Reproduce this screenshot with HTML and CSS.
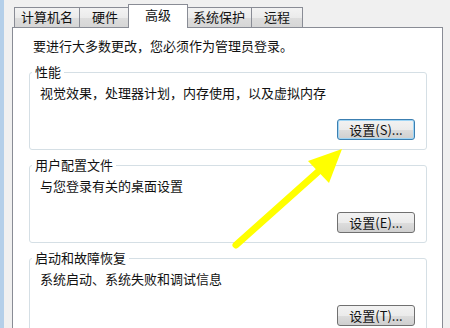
FILE: index.html
```html
<!DOCTYPE html>
<html lang="zh-CN">
<head>
  <meta charset="UTF-8" />
  <title>系统属性 - 高级</title>
  <link rel="stylesheet" href="styles.css">
</head>
<body>
  <div class="window">
    <div class="tabs">
      <div class="tab">计算机名</div>
      <div class="tab">硬件</div>
      <div class="tab active">高级</div>
      <div class="tab">系统保护</div>
      <div class="tab">远程</div>
    </div>

    <div class="panel">
      <p class="note">要进行大多数更改，您必须作为管理员登录。</p>

      <fieldset class="group">
        <legend>性能</legend>
        <p class="desc">视觉效果，处理器计划，内存使用，以及虚拟内存</p>
        <div class="actions"><button class="btn focused">设置(S)...</button></div>
      </fieldset>

      <fieldset class="group">
        <legend>用户配置文件</legend>
        <p class="desc">与您登录有关的桌面设置</p>
        <div class="actions"><button class="btn">设置(E)...</button></div>
      </fieldset>

      <fieldset class="group">
        <legend>启动和故障恢复</legend>
        <p class="desc">系统启动、系统失败和调试信息</p>
        <div class="actions"><button class="btn">设置(T)...</button></div>
      </fieldset>
    </div>
  </div>

  <svg class="arrow" width="450" height="328" viewBox="0 0 450 328">
    <line x1="236" y1="245" x2="320" y2="170" stroke="#ffff00" stroke-width="7" stroke-linecap="round" />
    <polygon points="342,149 308,161 329,183" fill="#ffff00" />
  </svg>
</body>
</html>
```

FILE: styles.css
```css
body {
  margin: 0;
  width: 450px;
  height: 328px;
  overflow: hidden;
  background: #f0f0f0;
  font-family: "Noto Sans CJK SC", "Noto Sans", sans-serif;
  font-size: 13px;
  color: #111;
}

.window {
  display: flex;
  flex-direction: column;
  border-left: 4px solid #b4cfe9;
  padding: 4px 7px 0 8px;
  height: 100%;
  box-sizing: border-box;
}

.tabs {
  display: flex;
  align-items: flex-end;
  margin-left: 2px;
}

.tab {
  box-sizing: border-box;
  min-width: 52px;
  height: 20px;
  line-height: 18px;
  padding: 0 6px;
  text-align: center;
  border: 1px solid #898c95;
  border-bottom: none;
  background: linear-gradient(#f3f3f3, #ebebeb 50%, #dddddd 51%, #d6d6d6);
  margin-left: -1px;
}

.tab:first-child {
  margin-left: 0;
}

.tab.active {
  min-width: 60px;
  height: 24px;
  line-height: 20px;
  margin: 0 -2px -1px -3px;
  background: #fff;
  position: relative;
  z-index: 1;
}

.tab.active + .tab {
  margin-left: 0;
}

.panel {
  flex: 1;
  overflow: hidden;
  background: #fff;
  border: 1px solid #898c95;
  border-bottom: none;
  padding: 10px 15px 0 16px;
}

.note {
  margin: 0 0 10px 4px;
  line-height: 16px;
}

.group {
  margin: 0 0 7px 0;
  padding: 5px 11px 9px 10px;
  border: 1px solid #d5dfe5;
  border-radius: 3px;
}

.group legend {
  margin-left: -8px;
  padding: 0 3px;
  line-height: 16px;
}

.desc {
  margin: 0;
  line-height: 16px;
}

.actions {
  display: flex;
  justify-content: flex-end;
  margin-top: 18px;
}

.btn {
  width: 78px;
  height: 21px;
  padding: 0;
  font-family: inherit;
  font-size: 13px;
  line-height: 18px;
  color: #111;
  border: 1px solid #707070;
  border-radius: 3px;
  background: linear-gradient(#f2f2f2, #ebebeb 50%, #dddddd 51%, #cfcfcf);
}

.btn.focused {
  border-color: #3c7fb1;
  box-shadow: inset 0 0 0 1px #9fd5f5;
}

.arrow {
  position: absolute;
  left: 0;
  top: 0;
  pointer-events: none;
}
```
